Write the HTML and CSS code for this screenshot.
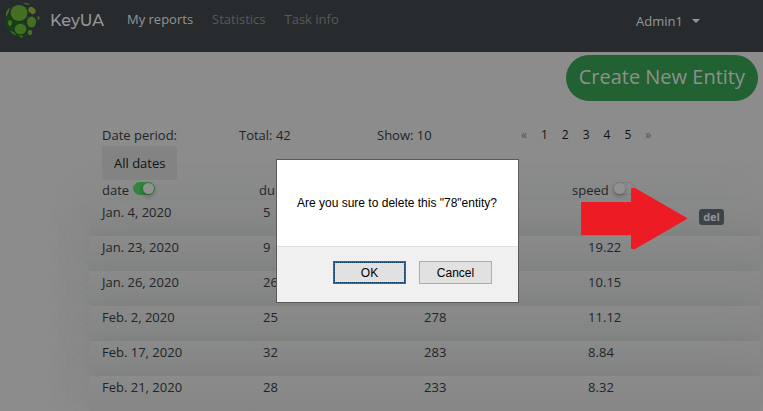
FILE: index.html
```html
<!DOCTYPE html>
<html lang="en">
<head>
<meta charset="utf-8">
<title>KeyUA reports</title>
<link rel="stylesheet" href="styles.css">
</head>
<body>
<header class="navbar">
  <a class="brand" href="#">
    <svg class="logo" viewBox="0 0 36 38" aria-hidden="true">
      <path fill="#173f16" d="M2 9Q0 12 0 17Q0 25 4 29Q10 36 20 36L22 34L17 32L22 29L23 25L20 20L16 20L5 15Z"/>
      <g fill="#426f21">
        <ellipse cx="14" cy="11" rx="8.500" ry="8"/>
        <ellipse cx="26.500" cy="20" rx="4.500" ry="5.500"/>
        <ellipse cx="15.500" cy="27" rx="5.800" ry="5.200"/>
        <ellipse cx="5" cy="21" rx="2" ry="3"/>
        <ellipse cx="25" cy="30.500" rx="2.200" ry="2.700"/>
        <path d="M18 1Q22 0 25 3Q21 3 18 1ZM1 11Q3 6 5 6Q4 11 1 15ZM5 29Q9 29 11 33Q7 32 5 29ZM13 33L18 34L17 36Z"/>
        <ellipse cx="33.500" cy="16" rx="1" ry="2"/>
      </g>
      <ellipse cx="27" cy="8.500" rx="4" ry="3" transform="rotate(40 27 8.500)" fill="#5c7420"/>
    </svg>
    <span>KeyUA</span>
  </a>
  <nav class="links">
    <a class="active" href="#">My reports</a>
    <a href="#">Statistics</a>
    <a href="#">Task info</a>
  </nav>
  <button class="account" type="button">Admin1 <span class="caret"></span></button>
</header>
<main>
  <div class="actions"><button class="create" type="button">Create New Entity</button></div>
  <section class="report">
    <div class="filters">
      <div class="period"><span>Date period:</span><button class="dates" type="button">All dates</button></div>
      <div>Total: 42</div>
      <div>Show: 10</div>
      <nav class="pages" aria-label="Pages">
        <a class="step" href="#">«</a><a href="#">1</a><a href="#">2</a><a href="#">3</a><a href="#">4</a><a href="#">5</a><a class="step" href="#">»</a>
      </nav>
    </div>
    <table>
      <thead>
        <tr>
          <th class="date"><label>date <input class="switch" type="checkbox" checked></label></th>
          <th class="duration">du</th>
          <th class="distance"></th>
          <th class="speed"><label>speed <input class="switch" type="checkbox"></label></th>
          <th class="tools"></th>
        </tr>
      </thead>
      <tbody>
        <tr><td>Jan. 4, 2020</td><td>5</td><td></td><td></td><td><button class="del" type="button">del</button></td></tr>
        <tr><td>Jan. 23, 2020</td><td>9</td><td></td><td>19.22</td><td></td></tr>
        <tr><td>Jan. 26, 2020</td><td>26</td><td></td><td>10.15</td><td></td></tr>
        <tr><td>Feb. 2, 2020</td><td>25</td><td>278</td><td>11.12</td><td></td></tr>
        <tr><td>Feb. 17, 2020</td><td>32</td><td>283</td><td>8.84</td><td></td></tr>
        <tr><td>Feb. 21, 2020</td><td>28</td><td>233</td><td>8.32</td><td></td></tr>
      </tbody>
    </table>
  </section>
</main>
<svg class="arrow" viewBox="0 0 106 62" aria-hidden="true"><path fill="#ed1c24" stroke="#ed1c24" stroke-width="2" stroke-linejoin="round" d="M1 15H51V1H54L105 30.500L54 60H51V46H1Z"/></svg>
<div class="dialog" role="dialog" aria-labelledby="question">
  <p class="question" id="question">Are you sure to delete this "78"entity?</p>
  <div class="choices">
    <button class="choice ok" type="button">OK</button>
    <button class="choice" type="button">Cancel</button>
  </div>
</div>
</body>
</html>
```
FILE: styles.css
```css
* { box-sizing: border-box; }
body {
  margin: 0;
  height: 100vh;
  overflow: hidden;
  background: #8c8c8c;
  color: #222528;
  font: 13px/22px "Open Sans", "Noto Sans", sans-serif;
}
button { font: inherit; color: inherit; border: 0; padding: 0; }
a { color: inherit; text-decoration: none; }

.navbar {
  display: flex;
  align-items: flex-start;
  height: 52px;
  padding: 2px 63px 0 5px;
  background: #272b2e;
  color: #95989a;
}
.brand { display: flex; align-items: center; gap: 9px; font: 500 16px/36px Montserrat, Lato, sans-serif; }
.logo { width: 36px; height: 38px; }
.links { display: flex; gap: 19px; margin: 6px auto 0 23px; color: #575a5c; }
.links .active { color: #929596; }
.account { display: flex; align-items: center; gap: 9px; margin-top: 8px; background: none; }
.caret { border: 4px solid transparent; border-top-color: #95989a; border-bottom: 0; }

.actions { display: flex; justify-content: flex-end; padding: 3px 5px 0; }
.create {
  height: 46px;
  padding: 0 13px 2px;
  border-radius: 23px;
  background: #226131;
  color: #8c918d;
  font-size: 20px;
}

.report { margin: 23px 3px 0 89px; }
.filters { display: grid; grid-template-columns: 137px 138px 144px 1fr; padding-left: 13px; }
.period { display: flex; flex-direction: column; align-items: flex-start; }
.dates {
  height: 34px;
  padding: 0 12px;
  border-radius: 3px;
  background: #838383;
  color: #101214;
}
.pages { display: flex; gap: 14px; color: #101214; font-size: 12px; }
.pages .step { color: #4f5357; }

table { width: 100%; table-layout: fixed; border-spacing: 0; }
th, td { padding: 0 0 0 13px; text-align: left; font-weight: normal; vertical-align: top; }
th { height: 21px; line-height: 20px; }
td { height: 35px; line-height: 22px; }
.date, .duration { width: 24%; }
.distance { width: 24%; }
.speed { width: 17%; }
th.duration { padding-left: 9px; }
th.speed { padding-left: 0; }
td:nth-child(4) { padding-left: 16px; }
tbody tr {
  border-radius: 5px;
  background: linear-gradient(#8b8b8b, #858685);
  box-shadow: 0 0 40px rgba(90, 105, 100, 0.2);
}
label { display: flex; align-items: flex-start; gap: 4px; }
.switch {
  appearance: none;
  display: flex;
  width: 22px;
  height: 13px;
  margin: 2px 0 0;
  border: 1px solid #7d7d7d;
  border-radius: 7px;
  background: #8a8a8a;
}
.switch::before {
  content: "";
  width: 11px;
  height: 11px;
  border-radius: 50%;
  background: #919191;
  box-shadow: 0 2px 4px rgba(0, 0, 0, 0.3);
}
.switch:checked { justify-content: flex-end; border-color: #34833f; background: #34833f; }
.del {
  display: block;
  height: 16px;
  margin-top: 8px;
  padding: 0 4px;
  border-radius: 3px;
  background: #3d4246;
  color: #919394;
  font-size: 11px;
  line-height: 16px;
  font-weight: bold;
}

.arrow { position: absolute; left: 581px; top: 188px; width: 106px; height: 62px; }
.dialog {
  position: absolute;
  left: 276px;
  top: 159px;
  width: 243px;
  border: 1px solid #5b5b5b;
  background: #fff;
  color: #000;
  font: 12px/16px "Liberation Sans", Arial, sans-serif;
}
.question { margin: 0; padding: 35px 20px; white-space: nowrap; }
.choices { display: flex; justify-content: flex-end; gap: 13px; padding: 14px 26px 18px; border-top: 1px solid #dfdfdf; background: #f0f0f0; }
.choice { width: 73px; height: 23px; border: 1px solid #adadad; background: #e1e1e1; }
.ok { border: 2px solid #0078d7; outline: 1px dotted #0b3d66; outline-offset: -2px; }
```
